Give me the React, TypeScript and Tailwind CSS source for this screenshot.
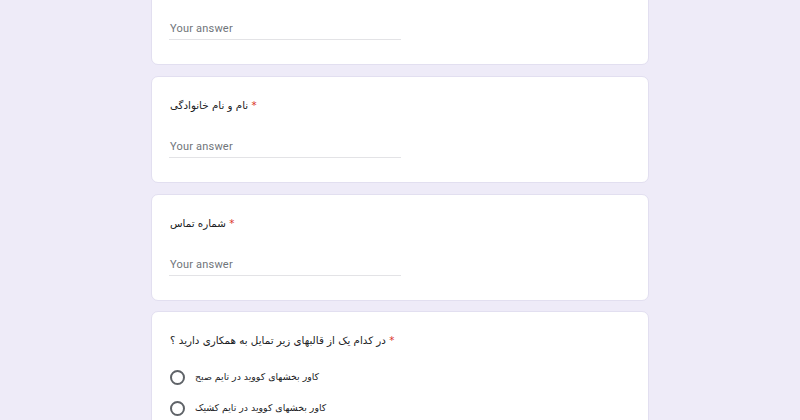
import React from "react";

const fa = { fontFamily: '"DejaVu Sans", "Noto Sans", sans-serif' };

function Title({ text }: { text: string }) {
  return (
    <div className="h-[20px] leading-[20px] text-[10.3px] text-[#202124] pl-[1px]" style={fa}>
      {text}
      <span className="text-[#d93025]"> *</span>
    </div>
  );
}

function Answer() {
  return (
    <div className="mt-[22px] h-[21px] w-[232px] border-b border-[#e3e3e6] pl-[1px] leading-[20px] text-[11px] text-[#70757a] font-['Roboto',sans-serif] tracking-[0.2px]">
      Your answer
    </div>
  );
}

function Card({ children, className = "" }: { children: React.ReactNode; className?: string }) {
  return (
    <div className={"w-[498px] bg-white rounded-[7px] border border-[#e2dff0] px-[17px] pt-[18px] pb-[24px] " + className}>
      {children}
    </div>
  );
}

function Radio({ label }: { label: string }) {
  return (
    <div className="flex items-center h-[24px]">
      <div className="w-[15px] h-[15px] rounded-full border-2 border-[#5f6368] ml-[1px]" />
      <div className="ml-[10px] text-[9.4px] text-[#202124]" style={fa}>
        {label}
      </div>
    </div>
  );
}

export default function App() {
  return (
    <div className="w-[800px] h-[420px] overflow-hidden bg-[#eeebf8] flex flex-col items-center gap-[11px]">
      <Card className="-mt-[42px]">
        <div className="h-[20px]" />
        <Answer />
      </Card>
      <Card>
        <Title text="نام و نام خانوادگی" />
        <Answer />
      </Card>
      <Card>
        <Title text="شماره تماس" />
        <Answer />
      </Card>
      <Card className="-mt-[1px]">
        <Title text="در کدام یک از قالبهای زیر تمایل به همکاری دارید ؟" />
        <div className="mt-[15px] flex flex-col gap-[7px]">
          <Radio label="کاور بخشهای کووید در تایم صبح" />
          <Radio label="کاور بخشهای کووید در تایم کشیک" />
        </div>
      </Card>
    </div>
  );
}
